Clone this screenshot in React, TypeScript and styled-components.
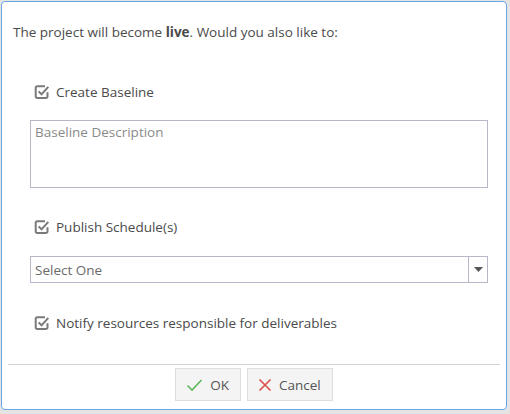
import React from "react";
import styled, { createGlobalStyle } from "styled-components";

const Global = createGlobalStyle`
  *, *::before, *::after { box-sizing: border-box; }
  html, body { margin: 0; padding: 0; }
  body {
    background: #e4e4e4;
    font-family: "Open Sans", "Noto Sans", sans-serif;
    width: 510px;
    height: 414px;
    overflow: hidden;
  }
`;

const Page = styled.div`
  padding: 1px 0 0 1px;
`;

const Dialog = styled.div`
  width: 506px;
  height: 409px;
  background: #fff;
  border: 1px solid #6aa7e4;
  border-radius: 4px;
  display: flex;
  flex-direction: column;
  color: #4a4a4a;
  font-size: 13.5px;
`;

const Body = styled.div`
  flex: 1;
  display: flex;
  flex-direction: column;
  padding: 20px 18px 0 11px;
`;

const Intro = styled.p`
  margin: 0;
  line-height: 20px;
`;

const Options = styled.div`
  display: flex;
  flex-direction: column;
  padding-left: 17px;
`;

const CheckRow = styled.label<{ $top: number }>`
  display: flex;
  align-items: center;
  gap: 6px;
  margin-top: ${(p) => p.$top}px;
  padding-left: 4px;
  line-height: 20px;
  height: 20px;
`;

const TextArea = styled.div`
  margin-top: 18px;
  height: 68px;
  border: 1px solid #b9b8ca;
  padding: 2px 4px;
  color: #8a8a8a;
  line-height: 18px;
`;

const Select = styled.div`
  margin-top: 19px;
  height: 27px;
  border: 1px solid #b9b8ca;
  display: flex;
  align-items: stretch;
`;

const SelectText = styled.div`
  flex: 1;
  padding-left: 4px;
  display: flex;
  align-items: center;
  color: #6a6a6a;
`;

const SelectButton = styled.div`
  width: 19px;
  border-left: 1px solid #b9b8ca;
  display: flex;
  align-items: center;
  justify-content: center;
`;

const Footer = styled.div`
  margin: 0 6px;
  border-top: 1px solid #d2d2d2;
  padding: 3px 0 8px;
  display: flex;
  justify-content: center;
  gap: 6px;
`;

const Button = styled.button`
  height: 33px;
  padding: 0 11px 0 10px;
  background: #f4f4f4;
  border: 1px solid #dedede;
  border-radius: 0;
  display: flex;
  align-items: center;
  gap: 7px;
  font-family: "Open Sans", "Noto Sans", sans-serif;
  font-size: 13.5px;
  color: #555;
`;

const CheckIcon = () => (
  <svg width="16" height="16" viewBox="0 0 16 16" fill="none">
    <path
      d="M11 2.2H3.3a1.6 1.6 0 0 0-1.6 1.6v8.6a1.6 1.6 0 0 0 1.6 1.6h8.6a1.6 1.6 0 0 0 1.6-1.6V8.2"
      stroke="#7a7a7a"
      strokeWidth="2"
    />
    <path d="M4.6 7.4l2.9 2.9 6.8-7.5" stroke="#7a7a7a" strokeWidth="2" />
  </svg>
);

const OkIcon = () => (
  <svg width="17" height="14" viewBox="0 0 17 14" fill="none">
    <path d="M1.5 7.5l4.5 4.5L15.5 2" stroke="#5cb85c" strokeWidth="1.6" />
  </svg>
);

const CancelIcon = () => (
  <svg width="14" height="14" viewBox="0 0 14 14" fill="none">
    <path d="M1.5 1.5l11 11M12.5 1.5l-11 11" stroke="#d9534f" strokeWidth="1.7" />
  </svg>
);

const Arrow = () => (
  <svg width="9" height="6" viewBox="0 0 9 6">
    <path d="M0 0h9L4.5 5z" fill="#555" />
  </svg>
);

export default function App() {
  return (
    <>
      <Global />
      <Page>
        <Dialog>
          <Body>
            <Intro>
              The project will become <b>live</b>. Would you also like to:
            </Intro>
            <Options>
              <CheckRow $top={40}>
                <CheckIcon />
                Create Baseline
              </CheckRow>
              <TextArea>Baseline Description</TextArea>
              <CheckRow $top={29}>
                <CheckIcon />
                Publish Schedule(s)
              </CheckRow>
              <Select>
                <SelectText>Select One</SelectText>
                <SelectButton>
                  <Arrow />
                </SelectButton>
              </Select>
              <CheckRow $top={30}>
                <CheckIcon />
                Notify resources responsible for deliverables
              </CheckRow>
            </Options>
          </Body>
          <Footer>
            <Button>
              <OkIcon />
              OK
            </Button>
            <Button>
              <CancelIcon />
              Cancel
            </Button>
          </Footer>
        </Dialog>
      </Page>
    </>
  );
}
